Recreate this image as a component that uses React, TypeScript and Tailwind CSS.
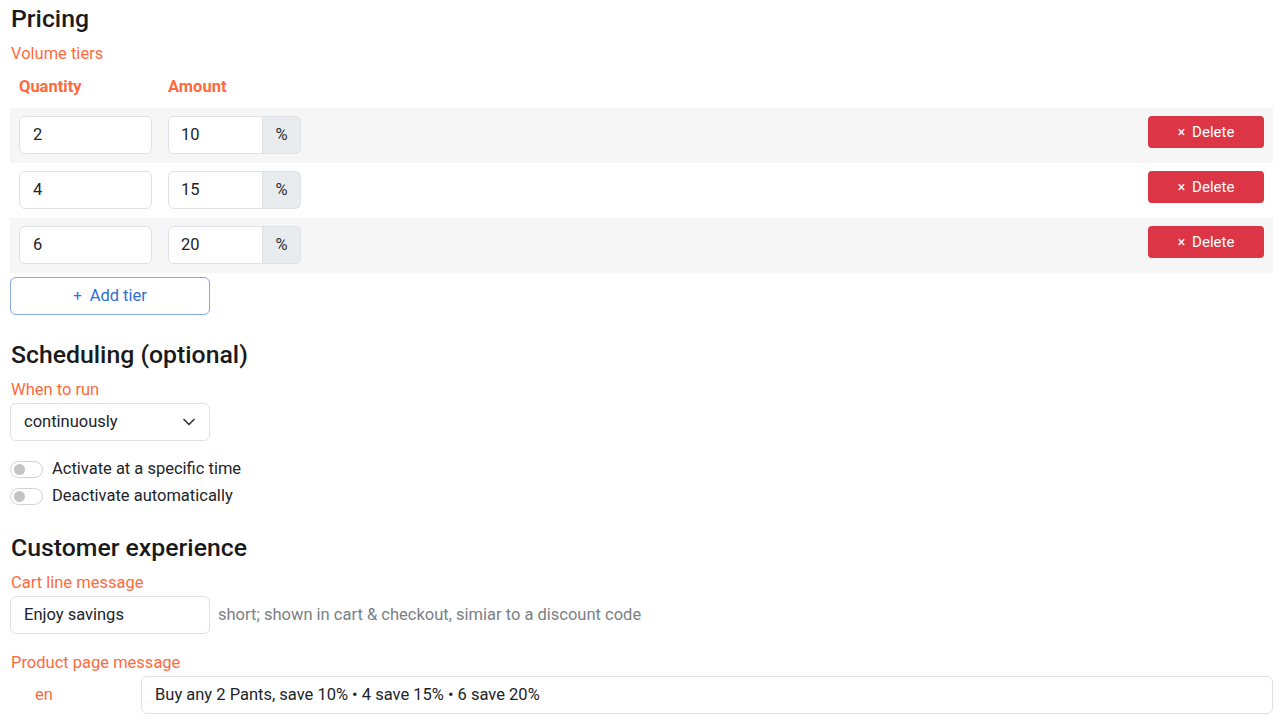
import React from "react";

const tiers = [
  { q: "2", a: "10" },
  { q: "4", a: "15" },
  { q: "6", a: "20" },
];

function Toggle({ label }: { label: string }) {
  return (
    <div className="flex items-center h-[27px]">
      <div className="w-[33px] h-[17px] rounded-full border border-[#cfd3d8] bg-white flex items-center pl-[3px]">
        <div className="w-[11px] h-[11px] rounded-full bg-[#c4c4c4]" />
      </div>
      <span className="ml-[9px] text-[16.5px] text-[#212529]">{label}</span>
    </div>
  );
}

export default function App() {
  return (
    <div
      className="w-[1280px] h-[720px] overflow-hidden bg-white text-[#212529] pl-[10px] pr-[7px]"
      style={{ fontFamily: "Roboto, 'Noto Sans', sans-serif" }}
    >
      <h2 className="text-[24.8px] font-medium leading-[28px] pt-[5px] pl-[1px] text-[#1a1a1a]">Pricing</h2>
      <div className="text-[16.5px] text-[#ff6a3d] mt-[11px] leading-[19px] pl-[1px]">Volume tiers</div>
      <div className="flex font-bold text-[16.5px] text-[#ff6a3d] mt-[14px] leading-[19px] pl-[9px]">
        <div className="w-[149px]">Quantity</div>
        <div>Amount</div>
      </div>
      <div className="mt-[12px]">
        {tiers.map((t, i) => (
          <div
            key={i}
            className={`flex items-start h-[55px] pt-[8px] px-[9px] ${i % 2 === 0 ? "bg-[#f6f6f6]" : "bg-white"}`}
          >
            <div className="w-[133px] h-[38px] rounded-[6px] border border-[#dee2e6] bg-white flex items-center pl-[13px] text-[16.5px]">
              {t.q}
            </div>
            <div className="ml-[16px] flex h-[38px]">
              <div className="w-[95px] rounded-l-[6px] border border-[#dee2e6] bg-white flex items-center pl-[12px] text-[16.5px]">
                {t.a}
              </div>
              <div className="w-[38px] rounded-r-[6px] border border-l-0 border-[#dee2e6] bg-[#e9ecef] flex items-center justify-center text-[16.5px] text-[#333]">
                %
              </div>
            </div>
            <div className="flex-1" />
            <button className="w-[116px] h-[32px] rounded-[4px] bg-[#dc3545] text-white text-[15px] flex items-center justify-center">
              <span className="text-[14px] mr-[7px]">×</span>Delete
            </button>
          </div>
        ))}
      </div>
      <button className="mt-[4px] w-[200px] h-[38px] rounded-[6px] border border-[#86a8e7] bg-white text-[#2f6fd6] text-[16.5px] flex items-center justify-center">
        <span className="mr-[8px] text-[15px]">+</span>Add tier
      </button>

      <h2 className="text-[24.8px] font-medium leading-[28px] mt-[26px] pl-[1px] text-[#1a1a1a]">Scheduling (optional)</h2>
      <div className="text-[16.5px] text-[#ff6a3d] mt-[11px] leading-[19px] pl-[1px]">When to run</div>
      <div className="mt-[4px] w-[200px] h-[38px] rounded-[6px] border border-[#dee2e6] bg-white flex items-center justify-between pl-[13px] pr-[14px] text-[16.5px]">
        <span>continuously</span>
        <svg width="12" height="8" viewBox="0 0 12 8" fill="none">
          <path d="M1 1.5 L6 6.5 L11 1.5" stroke="#343a40" strokeWidth="1.7" strokeLinecap="round" strokeLinejoin="round" />
        </svg>
      </div>
      <div className="mt-[15px]">
        <Toggle label="Activate at a specific time" />
        <Toggle label="Deactivate automatically" />
      </div>

      <h2 className="text-[24.8px] font-medium leading-[28px] mt-[24px] pl-[1px] text-[#1a1a1a]">Customer experience</h2>
      <div className="text-[16.5px] text-[#ff6a3d] mt-[11px] leading-[19px] pl-[1px]">Cart line message</div>
      <div className="flex items-center mt-[4px]">
        <div className="w-[200px] h-[38px] rounded-[6px] border border-[#dee2e6] bg-white flex items-center pl-[13px] text-[16.5px]">
          Enjoy savings
        </div>
        <span className="ml-[8px] text-[16.5px] text-[#7a7f85]">short; shown in cart &amp; checkout, simiar to a discount code</span>
      </div>
      <div className="text-[16.5px] text-[#ff6a3d] mt-[19px] leading-[19px] pl-[1px]">Product page message</div>
      <div className="flex items-center mt-[4px]">
        <div className="w-[131px] pl-[25px] text-[16.5px] text-[#ff6a3d]">en</div>
        <div className="flex-1 h-[38px] rounded-[6px] border border-[#dee2e6] bg-white flex items-center pl-[13px] text-[16.5px]">
          Buy any 2 Pants, save 10% • 4 save 15% • 6 save 20%
        </div>
      </div>
    </div>
  );
}
